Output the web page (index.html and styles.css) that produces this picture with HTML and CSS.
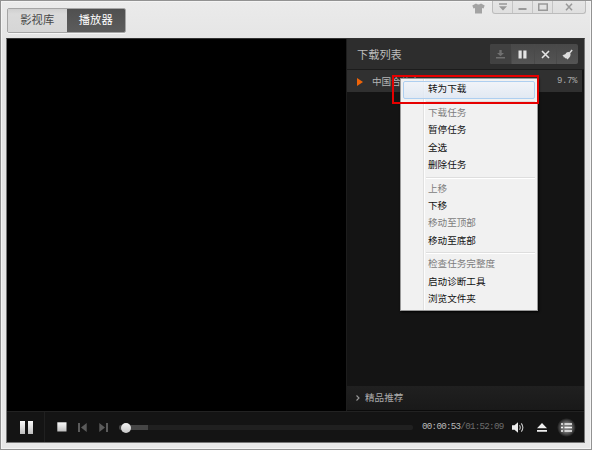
FILE: index.html
```html
<!DOCTYPE html>
<html lang="zh-CN">
<head>
<meta charset="utf-8">
<title>播放器</title>
<link rel="stylesheet" href="styles.css">
</head>
<body>
<div class="window">
  <header class="titlebar">
    <nav class="tabs"><span class="tab">影视库</span><span class="tab tab-active">播放器</span></nav>
    <div class="win-tools">
      <svg class="shirt" width="13" height="11" viewBox="0 0 13 11"><path d="M4 .5Q6.500 2.500 9 .5L12.700 2.500 11.500 5.500 10 5V10.500H3V5L1.500 5.500.3 2.500Z" fill="#a3a3a3"/></svg>
      <div class="win-buttons">
        <span class="wb wb-menu"><svg width="8" height="8" viewBox="0 0 8 8"><path d="M0 1H8" stroke="#999" stroke-width="1.500"/><path d="M0 3.200H8L4 7.500Z" fill="#999"/></svg></span>
        <span class="wb wb-min"><svg width="9" height="8" viewBox="0 0 9 8"><path d="M.5 6H8.500" stroke="#999" stroke-width="2"/></svg></span>
        <span class="wb wb-max"><svg width="10" height="8" viewBox="0 0 10 8"><path d="M.75 1H9.250V7.250H.75Z" fill="none" stroke="#999" stroke-width="1.500"/></svg></span>
        <span class="wb wb-close"><svg width="8" height="8" viewBox="0 0 8 8"><path d="M1 .8L7 7.200M7 .8L1 7.200" stroke="#999" stroke-width="1.500"/></svg></span>
      </div>
    </div>
  </header>
  <main class="player">
    <div class="stage">
      <div class="video"></div>
      <aside class="side">
        <div class="side-head">
          <h1 class="side-title">下载列表</h1>
          <div class="tools">
            <span class="tool tool-off"><svg width="9" height="9" viewBox="0 0 9 9"><path d="M3.300 0H5.700V3H8L4.500 6.200 1 3H3.300ZM0 7H9V8.500H0Z" fill="#707070"/></svg></span>
            <span class="tool"><svg width="9" height="9" viewBox="0 0 9 9"><path d="M.5 .5H3.700V8.500H.5ZM5.300 .5H8.500V8.500H5.300Z" fill="#e4e4e4"/></svg></span>
            <span class="tool"><svg width="9" height="9" viewBox="0 0 9 9"><path d="M1 1L8 8M8 1L1 8" stroke="#e4e4e4" stroke-width="1.600"/></svg></span>
            <span class="tool"><svg width="11" height="11" viewBox="0 0 11 11"><path d="M9.600 .5L10.700 1.500 8.300 4.300Q9.500 7 5.500 10.500L4 9 3.300 9.500 2.500 8.200 1.500 8.300 1.400 7 .3 6.300Q4 5.500 4.600 3.400 6 2.500 7.200 3.200Z" fill="#dedede"/></svg></span>
          </div>
        </div>
        <div class="task"><svg width="6" height="8" viewBox="0 0 6 8"><path d="M0 0L6 4 0 8Z" fill="#f06408"/></svg><span class="task-name">中国合伙人</span><span class="task-pct">9.7%</span></div>
        <div class="side-body"></div>
        <div class="recommend"><svg width="4" height="6" viewBox="0 0 4 6"><path d="M.5 .5L3 3 .5 5.500" fill="none" stroke="#999" stroke-width="1.100"/></svg><span>精品推荐</span></div>
      </aside>
    </div>
    <footer class="controls">
      <div class="pause"><svg width="13" height="13" viewBox="0 0 13 13"><defs><linearGradient id="metal" x2="0" y2="1"><stop stop-color="#fafafa"/><stop offset=".5" stop-color="#ddd"/><stop offset="1" stop-color="#bdbdbd"/></linearGradient></defs><path d="M0 0H5V13H0ZM8 0H13V13H8Z" fill="url(#metal)"/></svg></div>
      <svg class="stop" width="10" height="10" viewBox="0 0 10 10"><path d="M.3 .3H9.500V9.500H.3Z" fill="url(#metal)"/></svg>
      <svg class="prev" width="9" height="9" viewBox="0 0 9 9"><path d="M0 0H2V9H0ZM8.700 0V9L3 4.500Z" fill="#5b5b5b"/></svg>
      <svg class="next" width="9" height="9" viewBox="0 0 9 9"><path d="M7 0H9V9H7ZM.3 0V9L6 4.500Z" fill="#5b5b5b"/></svg>
      <div class="track"><div class="buffer"></div><div class="thumb"></div></div>
      <div class="time"><b>00:00:53</b>/01:52:09</div>
      <svg class="volume" width="12" height="11" viewBox="0 0 12 11"><path d="M0 3.300H2.500L6 .3V10.700L2.500 7.700H0Z" fill="#eee"/><path d="M7.500 3.300Q9 5.500 7.500 7.700M9.300 1.300Q12.400 5.500 9.300 9.700" fill="none" stroke="#c9c9c9" stroke-width="1.100"/></svg>
      <svg class="eject" width="10" height="9" viewBox="0 0 10 9"><path d="M5 0L10 5.300H0ZM0 7H10V8.700H0Z" fill="#eee"/></svg>
      <div class="list-btn"><svg width="11" height="9" viewBox="0 0 11 9"><path d="M0 1H2M3.500 1H11M0 4.500H2M3.500 4.500H11M0 8H2M3.500 8H11" stroke="#f4f4f4" stroke-width="1.500"/></svg></div>
    </footer>
  </main>
</div>
<ul class="menu">
  <li class="item item-hot">转为下载</li>
  <li class="sep"></li>
  <li class="item off">下载任务</li>
  <li class="item">暂停任务</li>
  <li class="item">全选</li>
  <li class="item">删除任务</li>
  <li class="sep"></li>
  <li class="item off">上移</li>
  <li class="item">下移</li>
  <li class="item off">移动至顶部</li>
  <li class="item">移动至底部</li>
  <li class="sep"></li>
  <li class="item off">检查任务完整度</li>
  <li class="item">启动诊断工具</li>
  <li class="item">浏览文件夹</li>
</ul>
<div class="marker"></div>
</body>
</html>
```
FILE: styles.css
```css
* { box-sizing: border-box; }
body {
  margin: 0;
  width: 592px;
  height: 450px;
  overflow: hidden;
  position: relative;
  font-family: "Liberation Sans", "Noto Sans CJK SC", sans-serif;
}
svg { display: block; flex: none; }
.window {
  height: 450px;
  border: 1px solid #929292;
  box-shadow: inset 0 0 0 1px #f4f4f4;
  background: linear-gradient(#ebebeb, #e5e5e5 38px, #e3e3e3 80px, #e8e8e8);
  padding: 0 6px 6px 5px;
  display: flex;
  flex-direction: column;
}
.titlebar {
  height: 37px;
  flex: none;
  display: flex;
  justify-content: space-between;
  align-items: flex-start;
}
.tabs {
  display: flex;
  margin: 7px 0 0 1px;
  width: 119px;
  height: 25px;
  border: 1px solid #a5a5a5;
  border-radius: 2px;
  box-shadow: 0 1px #f5f5f5;
  overflow: hidden;
}
.tab {
  flex: 1;
  display: flex;
  align-items: center;
  justify-content: center;
  font-size: 11.3px;
  line-height: 1;
  padding-top: 1px;
  color: #484848;
  background: linear-gradient(#cfcfcf, #dadada 5px, #d6d6d6);
}
.tab-active {
  color: #fff;
  background: linear-gradient(#505050, #5c5c5c);
}
.win-tools { display: flex; margin-right: -1px; }
.shirt { margin: 2px 7px 0 0; }
.win-buttons {
  display: flex;
  height: 13px;
  border: 1px solid #bcbcbc;
  border-top: 0;
  border-radius: 0 0 3px 3px;
  background: linear-gradient(#e5e5e5, #dfdfdf);
}
.wb {
  width: 20px;
  display: flex;
  align-items: center;
  justify-content: center;
  border-left: 1px solid #c4c4c4;
}
.wb:first-child { border-left: 0; width: 19px; }
.wb-close { width: 33px; }
.player {
  flex: 1;
  min-height: 0;
  border: 1px solid #777;
  border-top-color: #333;
  background: #151515;
  display: flex;
  flex-direction: column;
}
.stage { flex: 1; display: flex; min-height: 0; }
.video { width: 339px; background: #000; }
.side {
  flex: 1;
  display: flex;
  flex-direction: column;
  border-left: 1px solid #1d1d1d;
  background: #141414;
}
.side-head {
  height: 31px;
  display: flex;
  align-items: center;
  justify-content: space-between;
  padding: 0 6px 0 10px;
  background: #2d2d2d;
  border-bottom: 1px solid #1c1c1c;
}
.side-title {
  margin: 3px 0 0;
  font-size: 11.2px;
  font-weight: 400;
  line-height: 1;
  color: #bdbdbd;
}
.tools {
  display: flex;
  width: 88px;
  height: 20px;
  border-radius: 2px;
  overflow: hidden;
  background: linear-gradient(#484848, #545454);
}
.tool {
  flex: 1;
  display: flex;
  align-items: center;
  justify-content: center;
  border-left: 1px solid #4a4a4a;
}
.tool-off { background: #414141; border-left: 0; }
.task {
  height: 22px;
  display: flex;
  align-items: center;
  margin-right: 2px;
  padding: 1px 5px 0 10px;
  background: #303030;
}
.task-name {
  flex: 1;
  margin-left: 9px;
  font-size: 9.6px;
  line-height: 1;
  color: #b5b5b5;
}
.task-pct {
  font: 9px/1 "Liberation Mono", monospace;
  letter-spacing: -.4px;
  color: #a9a9a9;
}
.side-body { flex: 1; }
.recommend {
  height: 25px;
  display: flex;
  align-items: center;
  gap: 5px;
  padding-left: 9px;
  font-size: 9.6px;
  line-height: 1;
  color: #aaa;
  background: linear-gradient(#202020, #191919);
  border-bottom: 1px solid #0b0b0b;
}
.controls {
  height: 31px;
  display: flex;
  align-items: center;
  border-top: 1px solid #222;
  background: #141414;
}
.pause {
  width: 38px;
  height: 30px;
  padding-left: 13px;
  display: flex;
  align-items: center;
  border-right: 1px solid #202020;
}
.stop { margin-left: 12px; }
.prev { margin-left: 11px; }
.next { margin-left: 12px; }
.track {
  position: relative;
  width: 294px;
  height: 5px;
  margin-left: 11px;
  border-radius: 2px;
  background: #202020;
}
.buffer {
  width: 29px;
  height: 5px;
  border-radius: 2px 0 0 2px;
  background: #454545;
}
.thumb {
  position: absolute;
  left: 2px;
  top: -2px;
  width: 10px;
  height: 10px;
  border-radius: 50%;
  background: linear-gradient(#f2f2f2, #c8c8c8);
}
.time {
  width: 81px;
  margin-left: 9px;
  font: 9.2px/1 "Liberation Mono", monospace;
  letter-spacing: -.72px;
  color: #6d6d6d;
  white-space: nowrap;
}
.time b { font-weight: 400; color: #bbb; }
.volume { margin-left: 9px; }
.eject { margin-left: 13px; }
.list-btn {
  width: 19px;
  height: 19px;
  margin-left: 10px;
  display: flex;
  align-items: center;
  justify-content: center;
  border-radius: 50%;
  background: radial-gradient(circle closest-side, #8c8c8c 0, #6e6e6e 50%, #3a3a3a 80%, #141414);
}
.menu {
  position: absolute;
  left: 400px;
  top: 78px;
  width: 138px;
  height: 233px;
  margin: 0;
  padding: 2px;
  list-style: none;
  border: 1px solid #999;
  background: linear-gradient(90deg, #f1f1f1 22px, #e0e0e0 22px, #e0e0e0 23px, #fdfdfd 23px, #fdfdfd 24px, #f1f1f1 24px);
  box-shadow: 1px 1px 2px #000;
}
.item {
  height: 17.4px;
  padding-left: 25px;
  font-size: 9.6px;
  line-height: 15.4px;
  color: #111;
}
.off { color: #7d7d7d; }
.item-hot {
  height: 18px;
  padding-left: 24px;
  border: 1px solid #aecff0;
  border-radius: 2px;
  background: linear-gradient(rgba(240, 244, 250, .8), rgba(222, 231, 243, .8));
  line-height: 14px;
}
.sep {
  height: 6px;
  margin-left: 23px;
  background: linear-gradient(transparent 2px, #dedede 2px, #dedede 3px, #fff 3px, #fff 4px, transparent 4px);
}
.marker {
  position: absolute;
  left: 392px;
  top: 75px;
  width: 147px;
  height: 29px;
  border: 2px solid #e60000;
}
```
